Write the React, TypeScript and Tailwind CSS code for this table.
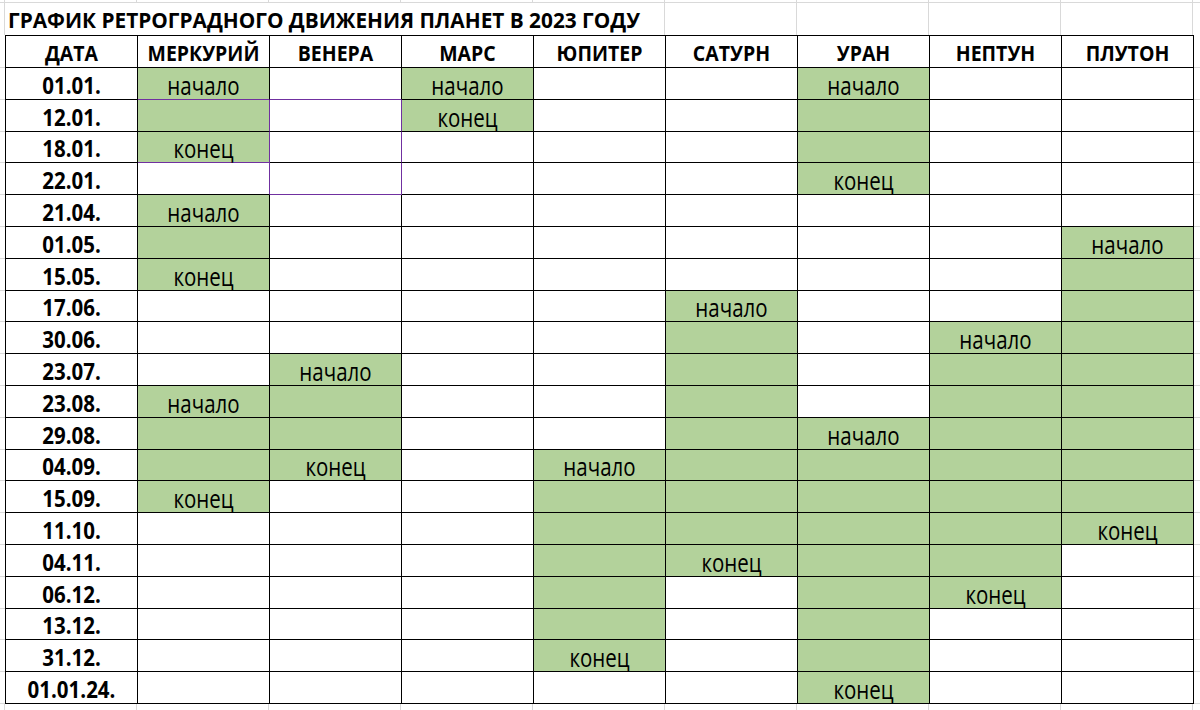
import React from "react";

const HEADERS = ["ДАТА", "МЕРКУРИЙ", "ВЕНЕРА", "МАРС", "ЮПИТЕР", "САТУРН", "УРАН", "НЕПТУН", "ПЛУТОН"];

// Me Ve Ma Ju Sa Ur Ne Pl — "." пусто, "g" зелёный, "n" начало, "k" конец
const ROWS: [string, string][] = [
  ["01.01.", "n.n..n.."],
  ["12.01.", "g.k..g.."],
  ["18.01.", "k....g.."],
  ["22.01.", ".....k.."],
  ["21.04.", "n......."],
  ["01.05.", "g......n"],
  ["15.05.", "k......g"],
  ["17.06.", "....n..g"],
  ["30.06.", "....g.ng"],
  ["23.07.", ".n..g.gg"],
  ["23.08.", "ng..g.gg"],
  ["29.08.", "gg..gngg"],
  ["04.09.", "gk.ngggg"],
  ["15.09.", "k..ggggg"],
  ["11.10.", "...ggggk"],
  ["04.11.", "...gkgg."],
  ["06.12.", "...g.gk."],
  ["13.12.", "...g.g.."],
  ["31.12.", "...k.g.."],
  ["01.01.24.", ".....k.."],
];

const font = { fontFamily: '"Open Sans", "Noto Sans", sans-serif' };

// строки по 32px, каждая третья из пяти — 31px (итого 636px)
const rowH = (r: number) => (r % 5 === 2 ? "h-[31px]" : "h-[32px]");

function purpleBottom(r: number, c: number) {
  return (r === 0 && (c === 1 || c === 2)) || (r === 2 && c === 1) || (r === 3 && c === 2);
}

function purpleRight(r: number, c: number) {
  return r >= 1 && r <= 3 && (c === 1 || c === 2);
}

function DataCell({ code, r, c }: { code: string; r: number; c: number }) {
  const green = code !== ".";
  const label = code === "n" ? "начало" : code === "k" ? "конец" : "";
  return (
    <div
      className={
        "flex items-center justify-center border-r border-b pt-[3px] text-[20.5px] leading-none text-black " +
        rowH(r) +
        " " +
        (green ? "bg-[#b3d29b] " : "bg-white ") +
        (purpleBottom(r, c) ? "border-b-[#7030a0] " : "border-b-black ") +
        (purpleRight(r, c) ? "border-r-[#7030a0]" : "border-r-black")
      }
    >
      {label && <span className="inline-block scale-y-[1.2]">{label}</span>}
    </div>
  );
}

export default function App() {
  return (
    <div className="flex h-[710px] w-[1200px] flex-col overflow-hidden bg-white" style={font}>
      {/* верхняя полоска сетки */}
      <div className="flex h-[3px] border-b border-[#d9d9d9]">
        <div className="w-[5px] border-r border-[#d9d9d9]" />
        {HEADERS.map((h) => (
          <div key={h} className="w-[132px] border-r border-[#d9d9d9]" />
        ))}
      </div>

      {/* заголовок */}
      <div className="flex h-[32px]">
        <div className="w-[5px] border-r border-[#d9d9d9]" />
        <div className="flex w-[660px] items-center border-r border-[#d9d9d9] pl-[3px] pt-[2px] text-[20.8px] font-bold leading-none whitespace-nowrap text-black">
          <span className="inline-block scale-y-[1.05]">ГРАФИК РЕТРОГРАДНОГО ДВИЖЕНИЯ ПЛАНЕТ В 2023 ГОДУ</span>
        </div>
        <div className="w-[132px] border-r border-[#d9d9d9]" />
        <div className="w-[132px] border-r border-[#d9d9d9]" />
        <div className="w-[132px] border-r border-[#d9d9d9]" />
        <div className="w-[132px] border-r border-[#d9d9d9]" />
      </div>

      {/* таблица */}
      <div className="flex">
        <div className="flex w-[5px] flex-col pt-[1px]">
          <div className="h-[32px] border-b border-[#d9d9d9]" />
          {ROWS.map(([d], r) => (
            <div key={d} className={rowH(r) + " border-b border-[#d9d9d9]"} />
          ))}
        </div>

        <div className="grid w-[1189px] grid-cols-[repeat(9,132px)] border-t border-l border-black">
          {HEADERS.map((h) => (
            <div
              key={h}
              className="flex h-[32px] items-center justify-center border-r border-b border-black pt-[2px] text-[19.5px] font-bold leading-none text-black"
            >
              <span className="inline-block scale-y-[1.08]">{h}</span>
            </div>
          ))}
          {ROWS.map(([date, codes], r) => (
            <React.Fragment key={date}>
              <div
                className={
                  "flex items-center justify-center border-r border-b border-black pt-[3px] text-[20.5px] font-bold leading-none text-black " +
                  rowH(r)
                }
              >
                <span className="inline-block scale-y-[1.1]">{date}</span>
              </div>
              {codes.split("").map((code, i) => (
                <DataCell key={i} code={code} r={r} c={i + 1} />
              ))}
            </React.Fragment>
          ))}
        </div>

        <div className="flex flex-1 flex-col pt-[1px]">
          <div className="h-[32px] border-b border-[#d9d9d9]" />
          {ROWS.map(([d], r) => (
            <div key={d} className={rowH(r) + " border-b border-[#d9d9d9]"} />
          ))}
        </div>
      </div>

      {/* нижняя полоска сетки */}
      <div className="flex flex-1">
        <div className="w-[5px] border-r border-[#d9d9d9]" />
        {HEADERS.map((h) => (
          <div key={h} className="w-[132px] border-r border-[#d9d9d9]" />
        ))}
      </div>
    </div>
  );
}
